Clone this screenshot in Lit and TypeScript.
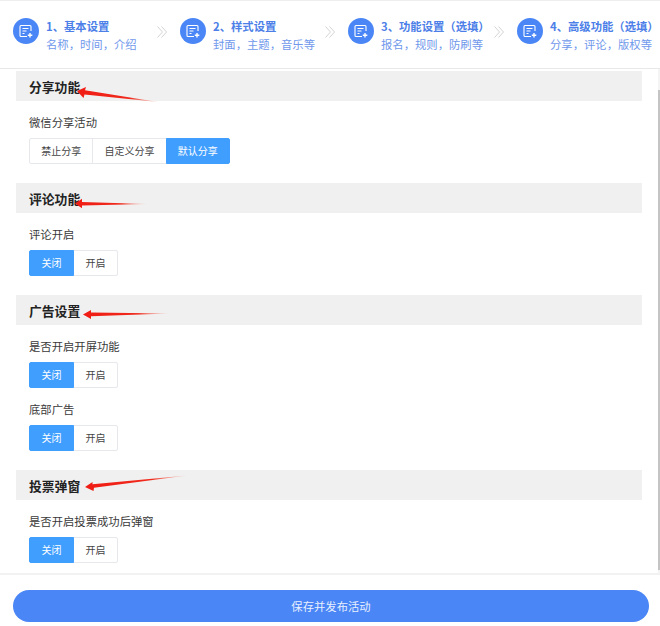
import { LitElement, html, css, svg } from "lit";
import { customElement } from "lit/decorators.js";

const steps = [
  ["1、基本设置", "名称，时间，介绍"],
  ["2、样式设置", "封面，主题，音乐等"],
  ["3、功能设置（选填）", "报名，规则，防刷等"],
  ["4、高级功能（选填）", "分享，评论，版权等"],
];

type Field = { label: string; options: string[]; active: number };
const sections: { title: string; fields: Field[] }[] = [
  { title: "分享功能", fields: [{ label: "微信分享活动", options: ["禁止分享", "自定义分享", "默认分享"], active: 2 }] },
  { title: "评论功能", fields: [{ label: "评论开启", options: ["关闭", "开启"], active: 0 }] },
  {
    title: "广告设置",
    fields: [
      { label: "是否开启开屏功能", options: ["关闭", "开启"], active: 0 },
      { label: "底部广告", options: ["关闭", "开启"], active: 0 },
    ],
  },
  { title: "投票弹窗", fields: [{ label: "是否开启投票成功后弹窗", options: ["关闭", "开启"], active: 0 }] },
];

const arrows = [
  [77, 91, 86, 87, 85, 90.3, 158, 102, 84.5, 94.4, 83.5, 98],
  [75, 203.5, 82, 198.8, 82, 202, 147, 204, 82, 205.6, 82, 208.2],
  [83, 314.5, 91, 310, 91, 312.5, 169, 313.5, 91, 316.2, 91, 319],
  [85, 487, 92.5, 482, 92.5, 484.3, 187, 475.5, 94, 487.8, 93.5, 491],
];

@customElement("app-root")
export class AppRoot extends LitElement {
  static styles = css`
    :host {
      display: block;
      position: relative;
      width: 660px;
      height: 626px;
      overflow: hidden;
      background: #fff;
      font-family: "Microsoft YaHei", "Noto Sans CJK SC", sans-serif;
      font-size: 11.33px;
      color: #333;
    }
    .page {
      display: flex;
      flex-direction: column;
      height: 626px;
    }
    .steps {
      flex: none;
      box-sizing: border-box;
      height: 69px;
      padding: 17px 0 0 13px;
      display: grid;
      grid-template-columns: 167px 168px 169px 143px;
      align-items: start;
      border-top: 1px solid #eee;
      border-bottom: 1px solid #e8e8e8;
    }
    .step {
      display: flex;
      align-items: flex-start;
      white-space: nowrap;
    }
    .circle {
      flex: none;
      width: 26px;
      height: 26px;
      border-radius: 50%;
      background: #4a86f5;
      display: flex;
      align-items: center;
      justify-content: center;
    }
    .step-text {
      margin-left: 7px;
      margin-top: -1px;
      line-height: 18px;
    }
    .step-title {
      font-weight: 700;
      color: #4c80e8;
    }
    .step-sub {
      color: #7098ec;
    }
    .chev {
      margin-left: auto;
      margin-right: 13px;
      margin-top: 8px;
      flex: none;
    }
    .body {
      flex: 1;
      position: relative;
      overflow: hidden;
      padding: 2px 18px 0 16px;
    }
    .head {
      height: 30px;
      line-height: 31px;
      background: #f0f0f0;
      padding-left: 13px;
      font-size: 12.8px;
      font-weight: 700;
      color: #222;
    }
    .section {
      margin-bottom: 19px;
    }
    .field {
      padding: 13px 0 0 13px;
    }
    .label {
      line-height: 16px;
      margin-bottom: 8px;
      color: #3a3a3a;
    }
    .group {
      display: flex;
      height: 26px;
    }
    .opt {
      box-sizing: border-box;
      height: 26px;
      line-height: 23px;
      padding: 0 11.5px;
      font-size: 10px;
      color: #444;
      border: 1px solid #e6e8ec;
      background: #fff;
    }
    .group.wide .opt {
      padding: 0 11.15px;
    }
    .opt + .opt {
      margin-left: -1px;
    }
    .opt:first-child {
      border-radius: 2px 0 0 2px;
    }
    .opt:last-child {
      border-radius: 0 2px 2px 0;
    }
    .opt.on {
      background: #409eff;
      border-color: #409eff;
      color: #fff;
      position: relative;
    }
    .scroll {
      position: absolute;
      top: 0;
      bottom: 0;
      right: 0;
      width: 2px;
      background: #f4f4f4;
    }
    .thumb {
      margin-top: 21px;
      height: 480px;
      background: #c4c4c4;
    }
    .foot {
      flex: none;
      box-sizing: border-box;
      height: 53px;
      padding: 15px 11px 0 13px;
      border-top: 2px solid #f2f2f2;
    }
    .save {
      height: 32px;
      line-height: 33px;
      border-radius: 16px;
      background: #4a86f5;
      color: #e8f0ff;
      text-align: center;
    }
    .overlay {
      position: absolute;
      left: 0;
      top: 0;
      pointer-events: none;
    }
  `;

  private icon() {
    return html`<svg width="16" height="16" viewBox="0 0 16 16" fill="none" stroke="#fff" stroke-width="1.1">
      <path d="M13 8V3.5a1 1 0 0 0-1-1H3a1 1 0 0 0-1 1v9a1 1 0 0 0 1 1h6" />
      <path d="M4.5 5.5h6M4.5 8h4M4.5 10.5h2" />
      <path d="M12 10v4.5M9.8 12.2h4.5" stroke-width="1.4" />
    </svg>`;
  }

  private chevron() {
    return html`<svg class="chev" width="10" height="12" viewBox="0 0 10 12" fill="none" stroke="#d4d4d4" stroke-width="1">
      <path d="M0.5 0.5 5.5 6l-5 5.5M4.5 0.5 9.5 6l-5 5.5" />
    </svg>`;
  }

  render() {
    return html`<div class="page">
        <div class="steps">
          ${steps.map(
            ([t, s], i) => html`<div class="step">
              <div class="circle">${this.icon()}</div>
              <div class="step-text">
                <div class="step-title">${t}</div>
                <div class="step-sub">${s}</div>
              </div>
              ${i < 3 ? this.chevron() : ""}
            </div>`
          )}
        </div>
        <div class="body">
          ${sections.map(
            (sec) => html`<div class="section">
              <div class="head">${sec.title}</div>
              ${sec.fields.map(
                (f) => html`<div class="field">
                  <div class="label">${f.label}</div>
                  <div class="group ${f.options.length > 2 ? "wide" : ""}">
                    ${f.options.map(
                      (o, i) => html`<div class="opt ${i === f.active ? "on" : ""}">${o}</div>`
                    )}
                  </div>
                </div>`
              )}
            </div>`
          )}
          <div class="scroll"><div class="thumb"></div></div>
        </div>
        <div class="foot"><div class="save">保存并发布活动</div></div>
      </div>
      <svg class="overlay" width="660" height="626">
        <defs>
          ${arrows.map(
            (a, i) => svg`<linearGradient id="g${i}" gradientUnits="userSpaceOnUse" x1="${a[0]}" y1="${a[1]}" x2="${a[6]}" y2="${a[7]}">
              <stop offset="0" stop-color="#f01c14" />
              <stop offset="0.65" stop-color="#f02a1c" />
              <stop offset="1" stop-color="#f8a090" stop-opacity="0.5" />
            </linearGradient>`
          )}
        </defs>
        ${arrows.map((a, i) => svg`<polygon points="${a.join(" ")}" fill="url(#g${i})" />`)}
      </svg>`;
  }
}
